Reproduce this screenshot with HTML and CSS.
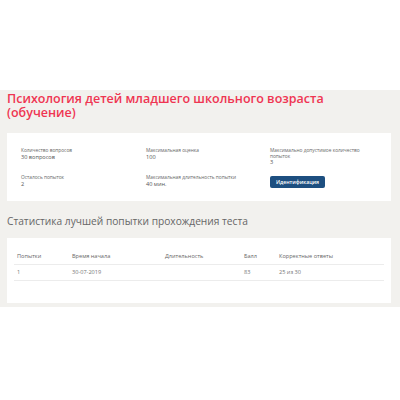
FILE: index.html
```html
<!DOCTYPE html>
<html lang="ru">
<head>
<meta charset="utf-8">
<link rel="stylesheet" href="styles.css">
</head>
<body>
<div class="top"></div>
<main class="main">
  <h1 class="title">Психология детей младшего школьного возраста (обучение)</h1>
  <section class="card info">
    <div class="item">
      <div class="label">Количество вопросов</div>
      <div class="value">30 вопросов</div>
    </div>
    <div class="item">
      <div class="label">Максимальная оценка</div>
      <div class="value">100</div>
    </div>
    <div class="item">
      <div class="label">Максимально допустимое количество попыток</div>
      <div class="value">3</div>
    </div>
    <div class="item">
      <div class="label">Осталось попыток</div>
      <div class="value">2</div>
    </div>
    <div class="item">
      <div class="label">Максимальная длительность попытки</div>
      <div class="value">40 мин.</div>
    </div>
    <div class="item">
      <button class="btn">Идентификация</button>
    </div>
  </section>
  <h2 class="subtitle">Статистика лучшей попытки прохождения теста</h2>
  <section class="card stats">
    <table class="table">
      <thead>
        <tr>
          <th class="c1">Попытки</th>
          <th class="c2">Время начала</th>
          <th class="c3">Длительность</th>
          <th class="c4">Балл</th>
          <th class="c5">Корректные ответы</th>
        </tr>
      </thead>
      <tbody>
        <tr>
          <td>1</td>
          <td>30-07-2019</td>
          <td></td>
          <td>83</td>
          <td>25 из 30</td>
        </tr>
      </tbody>
    </table>
  </section>
</main>
</body>
</html>
```
FILE: styles.css
```css
html, body {
  margin: 0;
  padding: 0;
  background: #ffffff;
  font-family: "Open Sans", "DejaVu Sans", sans-serif;
}
.top {
  height: 90px;
}
.main {
  background: #f2f1ee;
  padding: 2px 9px 4px 7px;
}
.title {
  margin: 0;
  font-size: 12.5px;
  line-height: 14px;
  font-weight: 600;
  color: #ef3552;
}
.card {
  background: #ffffff;
}
.info {
  margin-top: 13px;
  padding: 15px 20px 13px 14px;
  display: grid;
  grid-template-columns: 125px 124px 1fr;
  row-gap: 9px;
}
.label {
  font-size: 4.8px;
  line-height: 5.5px;
  color: #666;
}
.value {
  font-size: 5.6px;
  line-height: 7px;
  color: #555;
}
.btn {
  display: block;
  margin: 1px 0 0 0;
  width: 55px;
  height: 12px;
  padding: 0;
  border: none;
  border-radius: 2px;
  background: #1d4f80;
  color: #ffffff;
  font-family: "Open Sans", "DejaVu Sans", sans-serif;
  font-size: 5.2px;
  font-weight: 600;
}
.subtitle {
  margin: 13.5px 0 0 0;
  font-size: 10.2px;
  line-height: 13px;
  font-weight: 400;
  color: #666;
}
.stats {
  margin-top: 10px;
  padding: 11px 7px 22px 7px;
}
.table {
  width: 100%;
  border-collapse: collapse;
  table-layout: fixed;
}
.table th, .table td {
  height: 15px;
  padding: 0 0 0 3px;
  text-align: left;
  border-bottom: 1px solid #ececec;
  font-size: 5.6px;
  color: #777;
  vertical-align: middle;
}
.table th {
  font-weight: 400;
  color: #666;
}
.c1 { width: 52px; }
.c2 { width: 90px; }
.c3 { width: 76px; }
.c4 { width: 32px; }
```
